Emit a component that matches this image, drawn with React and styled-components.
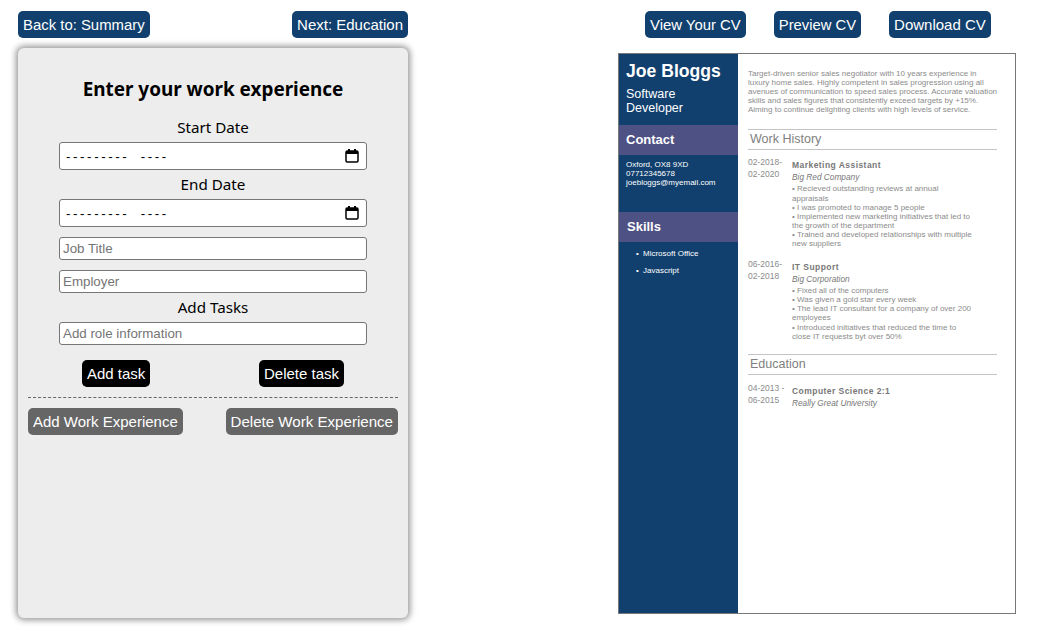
import React from 'react'
import styled, { createGlobalStyle } from 'styled-components'

const Global = createGlobalStyle`
  html, body { margin: 0; padding: 0; background: #fff; }
  body { font-family: "Liberation Sans", Arial, sans-serif; }
  * { box-sizing: border-box; }
`

const Page = styled.div`
  width: 1040px;
  height: 638px;
  display: flex;
  align-items: flex-start;
  overflow: hidden;
`

const LeftColumn = styled.div`
  width: 390px;
  margin-left: 18px;
  padding-top: 11px;
`

const RightColumn = styled.div`
  width: 398px;
  margin-left: 210px;
  padding-top: 11px;
`

const TopBar = styled.div`
  display: flex;
  justify-content: ${(p) => p.$justify || 'space-between'};
  gap: ${(p) => p.$gap || 0};
  padding-left: ${(p) => p.$inset || 0};
`

const Button = styled.button`
  height: 27px;
  padding: 0 5px;
  border: none;
  border-radius: 5px;
  background: ${(p) => p.$bg || '#11406e'};
  color: #fff;
  font-family: "Liberation Sans", Arial, sans-serif;
  font-size: ${(p) => p.$size || '15px'};
  white-space: nowrap;
`

const Card = styled.div`
  height: 570px;
  margin-top: 10px;
  padding: 27px 10px 0;
  background: #ededed;
  border-radius: 6px;
  box-shadow: 0 0 6px 2px rgba(0, 0, 0, 0.42);
  font-family: "Noto Sans", sans-serif;
`

const Heading = styled.h2`
  margin: 0 0 10px;
  text-align: center;
  font-size: 18.9px;
  line-height: 28px;
  font-weight: 700;
  color: #000;
`

const Fields = styled.div`
  width: 308px;
  margin: 0 auto;
  display: flex;
  flex-direction: column;
`

const FieldLabel = styled.label`
  display: block;
  height: 29px;
  text-align: center;
  font-size: 15.2px;
  line-height: 29px;
  color: #000;
`

const DateBox = styled.div`
  display: flex;
  align-items: center;
  justify-content: space-between;
  width: 308px;
  height: 28px;
  padding: 0 7px 0 6px;
  border: 1px solid #767676;
  border-radius: 3px;
  background: #fff;
`

const DateMask = styled.span`
  font-family: "Liberation Sans", Arial, sans-serif;
  font-size: 13.33px;
  letter-spacing: 2.6px;
  word-spacing: 5px;
  color: #000;
  white-space: pre;
`

const TextInput = styled.input`
  width: 308px;
  height: 23px;
  padding: 0 3px;
  margin-top: ${(p) => p.$top || 0};
  border: 1px solid #767676;
  border-radius: 3px;
  background: #fff;
  font-family: "Liberation Sans", Arial, sans-serif;
  font-size: 13.33px;
  &::placeholder { color: #757575; opacity: 1; }
`

const TaskButtons = styled.div`
  display: flex;
  justify-content: space-between;
  margin-top: 15px;
  padding: 0 54px;
`

const Dashed = styled.hr`
  margin: 10px 0;
  border: none;
  border-top: 1px dashed #666;
`

const ExperienceButtons = styled.div`
  display: flex;
  justify-content: space-between;
`

const Cv = styled.div`
  display: flex;
  width: 398px;
  height: 561px;
  margin-top: 15px;
  border: 1px solid #777;
  background: #fff;
`

const Sidebar = styled.div`
  width: 119px;
  flex: none;
  background: #11406e;
  color: #fff;
`

const NameBlock = styled.div`
  padding: 8px 7px 0;
  height: 71px;
`

const Name = styled.div`
  font-size: 17.6px;
  line-height: 19px;
  font-weight: 700;
`

const Role = styled.div`
  margin-top: 6px;
  font-size: 12.5px;
  line-height: 14px;
`

const SideTitle = styled.div`
  height: 30px;
  padding-left: ${(p) => p.$inset || '7px'};
  background: #4e5183;
  font-size: 13px;
  line-height: 29px;
  font-weight: 700;
`

const ContactText = styled.div`
  height: 57px;
  padding: 5px 7px 0;
  font-size: 8px;
  line-height: 9.2px;
`

const SkillList = styled.ul`
  margin: 0;
  padding: 3px 0 0 24px;
  list-style: none;
`

const Skill = styled.li`
  position: relative;
  font-size: 8px;
  line-height: 17px;
  &::before {
    content: '•';
    position: absolute;
    left: -7px;
  }
`

const Main = styled.div`
  flex: 1;
  padding: 15px 18px 0 10px;
  color: #8b8b8b;
`

const Summary = styled.p`
  margin: 0 0 15px;
  font-size: 8px;
  line-height: 9.1px;
  white-space: nowrap;
`

const SectionTitle = styled.div`
  height: 21px;
  margin-top: ${(p) => p.$top || 0};
  padding-left: 2px;
  border-top: 1px solid #c4c4c4;
  border-bottom: 1px solid #c4c4c4;
  font-size: 12.5px;
  line-height: 18px;
  color: #808080;
`

const Entry = styled.div`
  display: flex;
  margin-top: ${(p) => p.$top || '9px'};
`

const Dates = styled.div`
  width: 44px;
  margin-top: -3px;
  flex: none;
  font-size: 8.5px;
  line-height: 12px;
`

const EntryBody = styled.div`
  width: 182px;
`

const JobTitle = styled.div`
  font-size: 8.5px;
  line-height: 12px;
  font-weight: 700;
  letter-spacing: 0.45px;
  color: #777;
`

const Employer = styled.div`
  font-size: 8.3px;
  line-height: 12px;
  font-style: italic;
  color: #777;
`

const Tasks = styled.div`
  margin-top: 1px;
  font-size: 8px;
  line-height: 9.1px;
`

function CalendarIcon() {
  return (
    <svg width="14" height="14" viewBox="0 0 14 14">
      <path d="M3 0h2v2H3zM9 0h2v2H9z" fill="#000" />
      <rect x="1" y="2" width="12" height="11" rx="1.2" fill="none" stroke="#000" strokeWidth="1.5" />
      <rect x="1" y="2" width="12" height="3" fill="#000" />
    </svg>
  )
}

function DateField() {
  return (
    <DateBox>
      <DateMask>--------- ----</DateMask>
      <CalendarIcon />
    </DateBox>
  )
}

export default function App() {
  return (
    <Page>
      <Global />
      <LeftColumn>
        <TopBar>
          <Button $size="14.9px">Back to: Summary</Button>
          <Button>Next: Education</Button>
        </TopBar>
        <Card>
          <Heading>Enter your work experience</Heading>
          <Fields>
            <FieldLabel>Start Date</FieldLabel>
            <DateField />
            <FieldLabel>End Date</FieldLabel>
            <DateField />
            <TextInput $top="10px" placeholder="Job Title" />
            <TextInput $top="10px" placeholder="Employer" />
            <FieldLabel>Add Tasks</FieldLabel>
            <TextInput placeholder="Add role information" />
          </Fields>
          <TaskButtons>
            <Button $bg="#000">Add task</Button>
            <Button $bg="#000">Delete task</Button>
          </TaskButtons>
          <Dashed />
          <ExperienceButtons>
            <Button $bg="#666">Add Work Experience</Button>
            <Button $bg="#666" $size="15.1px">Delete Work Experience</Button>
          </ExperienceButtons>
        </Card>
      </LeftColumn>
      <RightColumn>
        <TopBar $justify="flex-start" $gap="28px" $inset="27px">
          <Button $size="14.9px">View Your CV</Button>
          <Button $size="14.8px">Preview CV</Button>
          <Button>Download CV</Button>
        </TopBar>
        <Cv>
          <Sidebar>
            <NameBlock>
              <Name>Joe Bloggs</Name>
              <Role>Software<br />Developer</Role>
            </NameBlock>
            <SideTitle>Contact</SideTitle>
            <ContactText>
              Oxford, OX8 9XD<br />07712345678<br />joebloggs@myemail.com
            </ContactText>
            <SideTitle $inset="8px">Skills</SideTitle>
            <SkillList>
              <Skill>Microsoft Office</Skill>
              <Skill>Javascript</Skill>
            </SkillList>
          </Sidebar>
          <Main>
            <Summary>
              Target-driven senior sales negotiator with 10 years experience in<br />
              luxury home sales. Highly competent in sales progression using all<br />
              avenues of communication to speed sales process. Accurate valuation<br />
              skills and sales figures that consistently exceed targets by +15%.<br />
              Aiming to continue delighting clients with high levels of service.
            </Summary>
            <SectionTitle>Work History</SectionTitle>
            <Entry>
              <Dates>02-2018-<br />02-2020</Dates>
              <EntryBody>
                <JobTitle>Marketing Assistant</JobTitle>
                <Employer>Big Red Company</Employer>
                <Tasks>
                  • Recieved outstanding reviews at annual appraisals<br />
                  • I was promoted to manage 5 people<br />
                  • Implemented new marketing initiatives that led to the growth of the department<br />
                  • Trained and developed relationships with multiple new suppliers
                </Tasks>
              </EntryBody>
            </Entry>
            <Entry $top="13px">
              <Dates>06-2016-<br />02-2018</Dates>
              <EntryBody>
                <JobTitle>IT Support</JobTitle>
                <Employer>Big Corporation</Employer>
                <Tasks>
                  • Fixed all of the computers<br />
                  • Was given a gold star every week<br />
                  • The lead IT consultant for a company of over 200 employees<br />
                  • Introduced initiatives that reduced the time to close IT requests byt over 50%
                </Tasks>
              </EntryBody>
            </Entry>
            <SectionTitle $top="13px">Education</SectionTitle>
            <Entry $top="10px">
              <Dates>04-2013 -<br />06-2015</Dates>
              <EntryBody>
                <JobTitle>Computer Science 2:1</JobTitle>
                <Employer>Really Great University</Employer>
              </EntryBody>
            </Entry>
          </Main>
        </Cv>
      </RightColumn>
    </Page>
  )
}
